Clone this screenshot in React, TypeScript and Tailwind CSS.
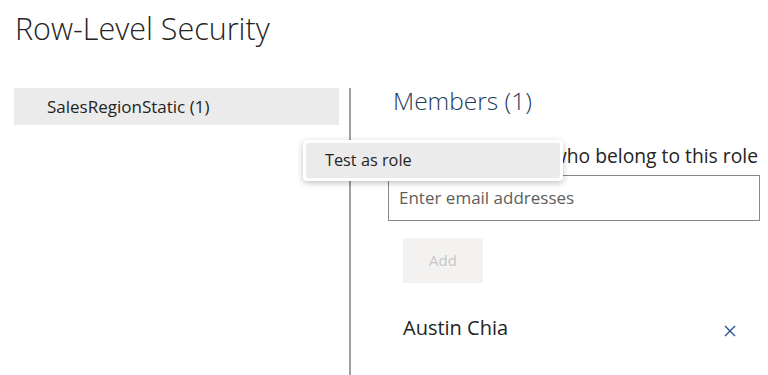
export default function App() {
  const font = { fontFamily: '"Open Sans", "Noto Sans", sans-serif' };
  return (
    <div className="relative w-[768px] h-[375px] overflow-hidden bg-white text-[#252423]" style={font}>
      <h1 className="pl-[15px] pt-[8px] text-[30.5px] leading-[40px] font-light text-[#252423]">Row-Level Security</h1>
      <div className="flex mt-[40px]">
        <div className="ml-[14px] w-[325px]">
          <div className="h-[37px] bg-[#ebebeb] pl-[33px] flex items-center text-[17px]">SalesRegionStatic (1)</div>
        </div>
        <div className="ml-[10px] w-[2px] h-[287px] bg-[#a0a0a0]" />
        <div className="ml-[37px] w-[372px] flex flex-col">
          <div className="pl-[5px] mt-[-3px] text-[24.5px] leading-[32px] font-light text-[#1f3a5a]">Members (1)</div>
          <div className="pl-[5px] mt-[26px] text-[19.3px] leading-[26px] text-[#252423] whitespace-nowrap">People or groups who belong to this role</div>
          <div className="mt-[6px] h-[46px] border border-[#8a8886] flex items-center pl-[10px] text-[17px] text-[#605e5c]">Enter email addresses</div>
          <div className="ml-[15px] mt-[17px] w-[80px] h-[45px] bg-[#f3f2f1] flex items-center justify-center text-[15px] text-[#c8c6c4]">Add</div>
          <div className="ml-[15px] mt-[31px] flex items-center justify-between pr-[24px]">
            <span className="text-[20px] leading-[28px]">Austin Chia</span>
            <svg width="12" height="12" viewBox="0 0 12 12" className="mt-[6px]">
              <path d="M1 1 L11 11 M11 1 L1 11" stroke="#1e4e8c" strokeWidth="1.3" />
            </svg>
          </div>
        </div>
      </div>
      <div className="absolute left-[303px] top-[140px] w-[260px] h-[41px] bg-white rounded-[4px] shadow-[0_2px_6px_rgba(0,0,0,0.25)] p-[3px]">
        <div className="h-full bg-[#ebebeb] rounded-[2px] flex items-center pl-[19px] text-[16.3px] text-[#252423]">Test as role</div>
      </div>
    </div>
  );
}
